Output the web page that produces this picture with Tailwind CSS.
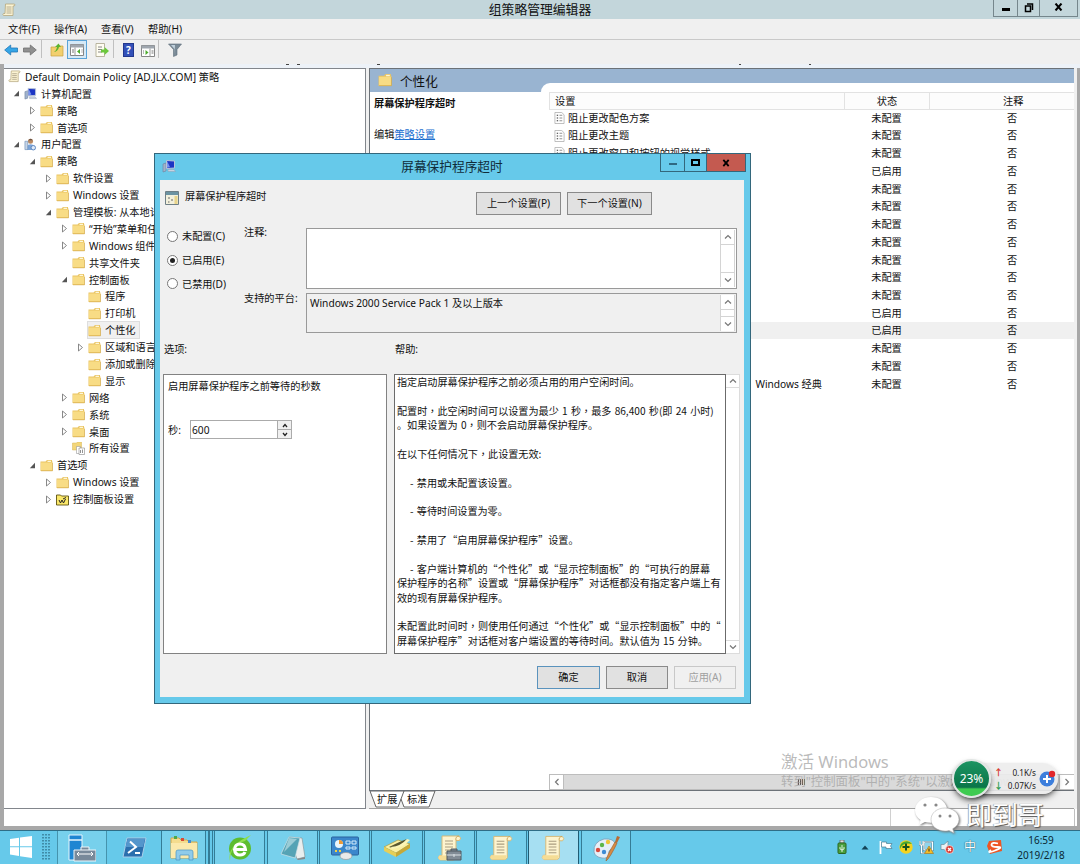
<!DOCTYPE html>
<html lang="zh-CN">
<head>
  <meta charset="UTF-8">
  <meta name="viewport" content="width=device-width, initial-scale=1.0">
  <title>组策略管理编辑器</title>
  <script src="https://cdn.jsdelivr.net/npm/@tailwindcss/browser@4"></script>
</head>
<body class="relative w-[1080px] h-[864px] overflow-hidden bg-[#f0f0f0] text-[10.2px] leading-none text-[#111] font-['Noto_Sans','Noto_Sans_CJK_SC',sans-serif] whitespace-nowrap">

  <!-- Icon sprite -->
  <svg class="hidden">
    <symbol id="folder" viewBox="0 0 13 13">
      <path d="M.5 2.500h5l1.500-1.500h5v1.500h.5v9.500h-12z" fill="#e9c463"/>
      <path d="M1 3.500h11v8H1z" fill="#f8dc85"/>
      <path d="M7.500 1.700h3.500v1.300h-3.500z" fill="#fdf6d8"/>
      <path d="M1 11.800h11.500V4" fill="none" stroke="#d0a644" stroke-width=".6"/>
    </symbol>
    <symbol id="scroll" viewBox="0 0 14 14">
      <path d="M3.500 1h9q1 1-.2 2H11v9.500H1.500q-1.200-1 0-2H3z" fill="#fbf3d3" stroke="#b5a77d" stroke-width=".8"/>
      <path d="M4.500 4h5M4.500 6h5M4.500 8h5M4.500 10h5" stroke="#a39a80" stroke-width=".8"/>
    </symbol>
    <symbol id="computer" viewBox="0 0 14 14">
      <path d="M1 5l3-1v8l-3 1z" fill="#9fb2cc" stroke="#6c7f9c" stroke-width=".6"/>
      <path d="M4.500 1.500l8 .5v7l-8 .5z" fill="#1c35c4" stroke="#b9c4d8"/>
      <path d="M5 2l3 6-3 .8z" fill="#7894f0"/>
      <path d="M6 10.500h6l1.500 2H6z" fill="#c9d2e0" stroke="#8494ac" stroke-width=".4"/>
    </symbol>
    <symbol id="user" viewBox="0 0 14 14">
      <circle cx="7" cy="3.500" r="2.700" fill="#b98962"/>
      <path d="M4.500 2.500q3-3.500 5 0z" fill="#6a5040"/>
      <path d="M3 13V8.500q4-4 9 .5v4z" fill="#7ba4d8"/>
      <path d="M1 3.500h3v9H1z" fill="#c6d4e6" stroke="#6f8fb8" stroke-width=".7"/>
      <circle cx="10" cy="10.500" r="2.400" fill="#dfeaf8" stroke="#5a84bd"/>
    </symbol>
    <symbol id="allset" viewBox="0 0 13 13">
      <path d="M.5 1h4l1-1h4v8h-9z" fill="#f3d679" stroke="#d6b455" stroke-width=".5"/>
      <path d="M4.500 4.500h4v7h-4z" fill="#fff" stroke="#999" stroke-width=".6"/>
      <path d="M7 6h5.500v6.500H7z" fill="#fff" stroke="#888" stroke-width=".6"/>
      <path d="M8.500 8v3M10.500 7.500v3.500" stroke="#777" stroke-width=".8"/>
    </symbol>
    <symbol id="cpl" viewBox="0 0 13 13">
      <path d="M.5 2h4l1 1h7v9h-12z" fill="#fbe86a" stroke="#5d5210" stroke-width=".9"/>
      <path d="M3 7l1.500 3 1.500-3 1.500 3L9.500 6M7 6l3-1.500" fill="none" stroke="#222"/>
    </symbol>
    <symbol id="item" viewBox="0 0 12 13">
      <path d="M1 .5h7.500L11 3v9.500H1z" fill="#fff" stroke="#a9a9a9" stroke-width=".8"/>
      <path d="M3 3.500h1.500M3 6.500h1.500M3 9.500h1.500" stroke="#333" stroke-width="1.300"/>
      <path d="M6 3.500h3M6 6.500h3M6 9.500h3" stroke="#888"/>
    </symbol>
    <symbol id="open" viewBox="0 0 7 7"><path d="M6 .8v5.400H.8z" fill="#555"/></symbol>
    <symbol id="closed" viewBox="0 0 7 9"><path d="M1.500 1v7L5.500 4.500z" fill="#fff" stroke="#7c7c7c" stroke-width=".9"/></symbol>
    <symbol id="up" viewBox="0 0 8 6"><path d="M1 4.500L4 1.500l3 3" fill="none" stroke="#777" stroke-width="1.200"/></symbol>
    <symbol id="down" viewBox="0 0 8 6"><path d="M1 1.500l3 3 3-3" fill="none" stroke="#777" stroke-width="1.200"/></symbol>
    <symbol id="bigscroll" viewBox="0 0 28 28">
      <path d="M6 2h17q3 2 .5 4.500H20V24q-1 2-3 2H4q-3-2-.5-4.500H6z" fill="#fdf4cf" stroke="#d6b978"/>
      <path d="M20 6.500q-1-4 3-4.500" fill="none" stroke="#c9a55c"/>
      <path d="M3.500 21.500H19q1 4-2 4.500H4q-3-2-.5-4.500z" fill="#f5dd96"/>
      <path d="M9 7h8M9 10h8M9 13h8M9 16h8M9 19h8" stroke="#a99c80" stroke-width="1.100"/>
    </symbol>
  </svg>

  <!-- Title bar -->
  <header class="flex h-[19px] bg-[#c3d6db]">
    <svg class="w-[14px] h-[14px] ml-[2px] mt-[3px]"><use href="#scroll"/></svg>
    <h1 class="flex-1 text-center text-[12.8px] leading-[19px] pl-[71px]">组策略管理编辑器</h1>
    <div class="flex h-[17px] w-[85px] mr-[2px] border border-t-0 border-[#75868c]">
      <div class="w-[24px] border-r border-[#75868c] flex justify-center"><span class="w-[8px] h-[3px] bg-black mt-[8px]"></span></div>
      <div class="w-[22px] border-r border-[#75868c] flex justify-center">
        <svg class="w-[10px] h-[10px] mt-[3px]" viewBox="0 0 10 10"><path d="M1.500 3h5v5.500h-5zM3 1h5.500v6" fill="none" stroke="#000" stroke-width="1.500"/></svg>
      </div>
      <div class="flex-1 flex justify-center"><svg class="w-[9px] h-[8px] mt-[3px]" viewBox="0 0 9 8"><path d="M1.500.5l6 7M7.500.5l-6 7" stroke="#000" stroke-width="2"/></svg></div>
    </div>
  </header>

  <!-- Menu -->
  <nav class="flex h-[21px] items-center pl-[8px] border-b border-[#c9c9c9]">
    <span class="w-[46px]">文件(F)</span>
    <span class="w-[47px]">操作(A)</span>
    <span class="w-[47px]">查看(V)</span>
    <span>帮助(H)</span>
  </nav>

  <!-- Toolbar -->
  <div class="flex h-[24px] items-start pl-[4px]">
    <svg class="w-[14px] h-[14px] mt-[3px]" viewBox="0 0 14 14"><path d="M.7 7l6-5v3h6.800v4H6.700v3z" fill="#35a5e6" stroke="#2277b8" stroke-width=".8"/></svg>
    <svg class="w-[14px] h-[14px] mt-[3px] ml-[5px]" viewBox="0 0 14 14"><path d="M13.300 7l-6-5v3H.5v4h6.800v3z" fill="#909090" stroke="#6e6e6e" stroke-width=".8"/></svg>
    <span class="w-px h-[18px] bg-[#c0c0c0] ml-[4px]"></span>
    <svg class="w-[14px] h-[14px] mt-[3px] ml-[8px]" viewBox="0 0 14 14"><path d="M1 4h5l1-1h6v10H1z" fill="#f2cf6e" stroke="#c9a040" stroke-width=".7"/><path d="M3 9q3 0 4-5H5l3.500-3.500L11 4H9Q8 9 3 9z" fill="#5cb52f"/></svg>
    <span class="flex items-center justify-center w-[20px] h-[19px] ml-[3px] border border-[#5aa3d8] bg-[#d5e9f7]">
      <svg class="w-[14px] h-[12px]" viewBox="0 0 14 12"><path d="M.5.500h13v11H.5z" fill="#fff" stroke="#858585"/><path d="M.5.500h13v3H.5z" fill="#9fa6ae"/><path d="M5 3.500v8" stroke="#999"/><path d="M2 6h2M2 8h2M11.500 6h1M11.500 8h1" stroke="#777"/><path d="M10 5v5L7 7.500z" fill="#4dab2c"/></svg>
    </span>
    <svg class="w-[14px] h-[14px] mt-[3px] ml-[8px]" viewBox="0 0 14 14"><path d="M1 .5h8.500v13H1z" fill="#fffdf2" stroke="#a8a48c" stroke-width=".8"/><path d="M3 4h4M3 6.500h4M3 9h4" stroke="#888"/><path d="M6 6.500h3.500V4L14 8l-4.500 4V9.500H6z" fill="#6cc83c"/></svg>
    <span class="w-px h-[18px] bg-[#c0c0c0] ml-[4px]"></span>
    <span class="flex items-center justify-center w-[11px] h-[14px] ml-[9px] mt-[3px] bg-[#3350b8] border border-[#22388e] text-white font-bold text-[10px]">?</span>
    <svg class="w-[14px] h-[12px] mt-[5px] ml-[7px]" viewBox="0 0 14 12"><path d="M.5.500h13v11H.5z" fill="#fff" stroke="#858585"/><path d="M.5.500h13v3H.5z" fill="#9fa6ae"/><path d="M9 3.500v8" stroke="#999"/><path d="M2 6h1M2 8h1M10.500 6h2M10.500 8h2" stroke="#777"/><path d="M4.500 5v5l3-2.500z" fill="#4dab2c"/></svg>
    <span class="w-px h-[18px] bg-[#c0c0c0] ml-[3px]"></span>
    <svg class="w-[14px] h-[14px] mt-[3px] ml-[9px]" viewBox="0 0 14 14"><path d="M.5 1h13L9 6.500V12l-3.500 1.500v-7z" fill="#7b8b97" stroke="#5c6c78" stroke-width=".6"/><path d="M3 2h4L6.500 11V6z" fill="#c2d2de"/></svg>
  </div>
  <!-- Clipped caption remains above the panes -->
  <div class="flex h-[4px] bg-[#edf2f8] border-l-4 border-[#a8a8a8]">
    <span class="w-[3px] h-px bg-[#444] ml-[282px]"></span><span class="w-[3px] h-px bg-[#444] ml-[8px]"></span>
    <span class="w-[3px] h-px bg-[#444] ml-[77px]"></span><span class="w-[2px] h-px bg-[#444] ml-[359px]"></span><span class="w-[2px] h-px bg-[#444] ml-[68px]"></span>
  </div>

  <!-- Panes -->
  <main class="flex h-[741px] border-l-4 border-r-3 border-[#a8a8a8]">
    <div id="tree" class="w-[362px] border border-l-0 border-[#82868c] bg-white overflow-hidden"></div>

    <div class="w-[705px] ml-[3px] flex flex-col">
      <section class="flex h-[723px] bg-[#99b4d1] border border-r-0 border-[#6c7278]">
        <!-- Extended view -->
        <div class="w-[171px] flex flex-col">
          <div class="flex h-[23px] items-center pl-[8px] text-[12.6px]">
            <svg class="w-[14px] h-[14px] -mt-[2px] mr-[8px]"><use href="#folder"/></svg><span class="mt-[3px]">个性化</span>
          </div>
          <div class="flex-1 bg-white pl-[4px] pt-[6px]">
            <p class="font-bold">屏幕保护程序超时</p>
            <p class="mt-[21px]">编辑<a class="text-[#1a6fd0] underline">策略设置</a></p>
          </div>
        </div>
        <!-- Settings list -->
        <div class="flex-1 flex flex-col mt-[14px] bg-white rounded-tl-[9px] pl-[8px]">
          <div class="flex h-[18px] mt-[9px] border border-[#e2e2e2] border-r-0 bg-[#fcfcfc] items-center">
            <span class="w-[294px] pl-[5px]">设置</span>
            <span class="w-[86px] h-full border-x border-[#e2e2e2] flex items-center justify-center">状态</span>
            <span class="flex-1 pl-[73px]">注释</span>
          </div>
          <div id="list" class="flex-1 -mt-px"></div>
          <div class="flex h-[16px] bg-[#dadada] border-y border-[#bdbdbd]">
            <span class="flex items-center justify-center w-[15px] bg-white border border-y-0 border-[#bdbdbd]"><svg class="w-[8px] h-[6px] -rotate-90"><use href="#up"/></svg></span>
            <span class="flex-1 flex items-center justify-center gap-px pr-[21px]"><i class="w-px h-[6px] bg-[#555]"></i><i class="w-px h-[6px] bg-[#555]"></i><i class="w-px h-[6px] bg-[#555]"></i><i class="w-px h-[6px] bg-[#555]"></i></span>
            <span class="flex items-center justify-center w-[15px] bg-white border-l border-[#bdbdbd]"><svg class="w-[8px] h-[6px] rotate-90"><use href="#up"/></svg></span>
          </div>
        </div>
      </section>
      <!-- View tabs -->
      <div class="h-[18px] border-b border-[#a0a0a0]">
        <svg class="w-[80px] h-[17px]" viewBox="0 0 80 17">
          <path d="M1 0L7 16H29L35 0zM32 8l3 8h25L66 0H35" fill="#fff" stroke="#555" stroke-width=".9"/>
          <text x="8" y="12" font-size="10.200" fill="#111">扩展</text>
          <text x="38" y="12" font-size="10.200" fill="#111">标准</text>
        </svg>
      </div>
    </div>
  </main>

  <!-- Status bar -->
  <div class="flex h-[17px] border-l-4 border-r-3 border-[#a8a8a8] bg-white">
    <span class="w-[887px] border-r border-[#d0d0d0]"></span><span class="w-[184px] border-r border-[#c0c0c0]"></span>
  </div>
  <div class="h-[4px] bg-[#a8a8a8]"></div>

  <!-- Taskbar -->
  <footer class="flex h-[34px] bg-[#66c9ea] border-t border-[#2f6d86]">
    <div class="flex w-[57px]">
      <svg class="w-[24px] h-[24px] ml-[9px] mt-[4px]" viewBox="0 0 24 24"><path d="M1 4l9-1.300v8.600H1zM11 2.500L23 1v10.300H11zM1 12.300h9V21l-9-1.500zM11 12.300h12V23l-12-1.700z" fill="#fff"/></svg>
      <svg class="w-[8px] h-[27px] ml-[9px] mt-[3px]" viewBox="0 0 8 27"><path d="M1 0v27M4 0v27M7 0v27" stroke="#27647c" stroke-width="1.200" stroke-dasharray="1.500 1.500"/></svg>
    </div>
    <div class="flex justify-center items-center w-[50px] bg-[#77d0ec] border-x border-[#4593ad]">
      <svg class="w-[28px] h-[28px]" viewBox="0 0 28 28"><path d="M1 1h13v25H1z" fill="#1f86d2" stroke="#e6f5fc"/><path d="M1 6h13" stroke="#e6f5fc" stroke-width="1.500"/><path d="M6 16h22v11H6zM13 16v-3h8v3" fill="#78899a" stroke="#eef5f9"/><path d="M9 20h16M11 18l-2 2 2 2M23 18l2 2-2 2" fill="none" stroke="#fff"/></svg>
    </div>
    <div class="flex justify-center items-center w-[54px]">
      <svg class="w-[25px] h-[21px]" viewBox="0 0 25 21"><path d="M5 1h19l-4 19H1z" fill="#2b6fae" stroke="#a9cfea"/><path d="M5.500 2H23l-2 8H3.500z" fill="#5496cc"/><path d="M8 4.500l6 5.500-8 6M13 16h5" fill="none" stroke="#fff" stroke-width="2"/></svg>
    </div>
    <div class="flex justify-center items-center w-[45px] bg-[#77d0ec] border-x border-[#347c96]">
      <svg class="w-[28px] h-[26px]" viewBox="0 0 28 26"><path d="M1 3h8l2 2h6l2 2h8v16H1z" fill="#f4dc8e" stroke="#d2a84a"/><path d="M1 8h26v15H1z" fill="#fbe9ac"/><path d="M4 1h3v3H4z" fill="#4ca94a"/><path d="M11 3h3v3h-3z" fill="#d84b36"/><path d="M18 5h3v3h-3z" fill="#448ad0"/><path d="M6 25v-8q0-2 2-2h13q2 0 2 2v8h-4v-5h-9v5z" fill="#8fcbea" stroke="#4793c4" stroke-width=".7"/></svg>
    </div>
    <div class="w-[3px] border-r border-[#347c96]"></div>
    <div class="w-[4px] mr-px border-x border-[#347c96]"></div>
    <div class="flex justify-center items-center w-[51px] mr-[2px] bg-[#77d0ec] border-x border-[#347c96]">
      <svg class="w-[26px] h-[28px]" viewBox="0 0 26 28"><circle cx="13" cy="14.500" r="11" fill="#5dbd2f"/><path d="M3 27Q-1 12 24 1q-5 5-6 6Q3 11 3 27z" fill="#8ee04c"/><path d="M7.500 15.500h11q-.5-5.500-5.500-5.500t-5.500 5.500q.5 5.500 5.500 5.500 4 0 5-3" fill="none" stroke="#fff" stroke-width="3"/></svg>
    </div>
    <div class="flex justify-center items-center w-[51px] mr-px bg-[#77d0ec] border-x border-[#347c96]">
      <svg class="w-[26px] h-[26px]" viewBox="0 0 26 26"><path d="M9 2l13 1 3 19-8 2z" fill="#e9eeee" stroke="#8a9a9d" stroke-width=".7"/><path d="M9 2l11 1-5 20-14-4z" fill="#55a3b5" stroke="#d3e3e6" stroke-width=".7"/><path d="M9 3l8 1-13 13z" fill="#9bccd6"/><path d="M17 24l8-2v2l-7 1z" fill="#888"/></svg>
    </div>
    <div class="flex justify-center items-center w-[51px] mr-px bg-[#77d0ec] border-x border-[#347c96]">
      <svg class="w-[28px] h-[24px]" viewBox="0 0 28 24"><rect x=".5" y="1" width="27" height="18" rx="1" fill="#3b87cc" stroke="#2a639d"/><circle cx="8" cy="8" r="4" fill="#e9f4fb"/><path d="M8 8V4a4 4 0 0 1 4 4z" fill="#ee9a35"/><path d="M15 5h4v3h-4zM21 5h4v3h-4zM15 11h4v2h-4zM21 11h4v2h-4z" fill="none" stroke="#d5ecfa"/><path d="M4 15h2M8 15h2" stroke="#f4d03c" stroke-width="2"/><ellipse cx="15" cy="20" rx="6" ry="3.500" fill="#e9e9e9" stroke="#999" stroke-width=".7"/></svg>
    </div>
    <div class="flex justify-center items-center w-[52px] mr-px bg-[#6ccbea] border-x border-[#347c96]">
      <svg class="w-[28px] h-[20px]" viewBox="0 0 28 20"><path d="M1 9L15 2l12 4L13 15z" fill="#faf0a2" stroke="#b09a34" stroke-width=".7"/><path d="M1 9l12 6v4L1 13z" fill="#e6cf58"/><path d="M13 15L27 6v4L13 19z" fill="#c7a937"/><path d="M6 9q9 3 18-8-6 2-18 8z" fill="#5a5830"/><path d="M8 9Q18 8 24 1l3 1Q20 10 9 11z" fill="#fbf5b8"/></svg>
    </div>
    <div class="flex justify-center items-center w-[51px] mr-px bg-[#77d0ec] border-x border-[#347c96]">
      <svg class="w-[28px] h-[28px]" viewBox="0 0 28 28"><use href="#bigscroll"/><path d="M11 17h14v9H11zM15 17v-2h6v2" fill="#818b95" stroke="#4e5861"/><path d="M11 21h14M18 20v3" stroke="#dce2e6"/></svg>
    </div>
    <div class="flex justify-center items-center w-[51px] mr-px bg-[#77d0ec] border-x border-[#347c96]"><svg class="w-[27px] h-[28px]"><use href="#bigscroll"/></svg></div>
    <div class="flex justify-center items-center w-[51px] mr-[2px] bg-[#a6dff2] border-x border-[#1f5c74]"><svg class="w-[27px] h-[28px]"><use href="#bigscroll"/></svg></div>
    <div class="flex justify-center items-center w-[50px] bg-[#77d0ec] border-x border-[#347c96]">
      <svg class="w-[28px] h-[28px]" viewBox="0 0 28 28"><path d="M2 18Q1 8 12 5q10-1 12 6 0 3-4 4t-3 5q-1 5-7 4-7-1-8-6z" fill="#e5eff7" stroke="#7d9db8" stroke-width=".8"/><circle cx="6" cy="16" r="2.200" fill="#d9493c"/><circle cx="10" cy="11" r="2.200" fill="#5bb548"/><circle cx="16" cy="8" r="2.200" fill="#efc437"/><circle cx="12" cy="18" r="2.200" fill="#3d8bd3"/><path d="M14 27q0-4 9-19l2 1q-7 15-11 18z" fill="#d78b45" stroke="#9b5c28" stroke-width=".6"/><path d="M23 8l2-6 3 1-3 6z" fill="#b96c34"/></svg>
    </div>

    <div class="flex items-center ml-auto h-[32px]">
      <svg class="w-[12px] h-[14px]" viewBox="0 0 12 14"><path d="M4 0h4v3H4z" fill="#ddd" stroke="#555" stroke-width=".7"/><rect x="2" y="3" width="8" height="10.500" rx="1" fill="#4aa03c" stroke="#2c6421"/><path d="M6 5v7M4 7v2l2 1M8 7v2l-2 1" fill="none" stroke="#fff" stroke-width=".8"/></svg>
      <svg class="w-[8px] h-[5px] ml-[13px]" viewBox="0 0 8 5"><path d="M4 .5L7.500 4.500h-7z" fill="#134357"/></svg>
      <svg class="w-[14px] h-[14px] ml-[10px]" viewBox="0 0 14 14"><path d="M1.500 1v13" stroke="#fff" stroke-width="1.800"/><path d="M2.500 2h5v1.500H13L11.500 6l1.500 2.500H7V7H2.500z" fill="#fff" stroke="#4b7d91" stroke-width=".7"/></svg>
      <svg class="w-[14px] h-[14px] ml-[6px]" viewBox="0 0 14 14"><circle cx="7" cy="7" r="6.700" fill="#f5d321"/><path d="M1 9Q4 2 13 4a6.700 6.700 0 0 0-12 5z" fill="#45ab31"/><path d="M7 3.500v7M3.500 7h7" stroke="#18541e" stroke-width="2"/></svg>
      <svg class="w-[15px] h-[14px] ml-[6px]" viewBox="0 0 15 14"><path d="M5 2h8.500v8H5z" fill="#8ed4ec" stroke="#3f7389" stroke-width="2"/><path d="M1 1v4h3V1M2.500 5v8H8" fill="none" stroke="#3f7389" stroke-width="2"/><path d="M5 2h8.500v8H5z" fill="none" stroke="#fff" stroke-width="1.200"/><path d="M1 1v4h3V1M2.500 5v8H8" fill="none" stroke="#fff" stroke-width="1.200"/><path d="M10 6l4.500 7.500h-9z" fill="#f6bd27" stroke="#a56f10" stroke-width=".6"/><path d="M10 8.500v3" stroke="#222"/></svg>
      <svg class="w-[14px] h-[14px] ml-[6px]" viewBox="0 0 14 14"><path d="M1 4.500h3L8 1v12L4 9.500H1z" fill="#e9f2f5" stroke="#6b8d9b" stroke-width=".7"/><circle cx="9.500" cy="9.500" r="4" fill="#d93a33" stroke="#fff" stroke-width=".6"/><path d="M8 8l3 3M11 8l-3 3" stroke="#fff" stroke-width="1.300"/></svg>
      <span class="ml-[10px] text-[12px] text-white [text-shadow:0_0_1px_#23566b,0_0_1px_#23566b]">中</span>
      <svg class="w-[15px] h-[14px] ml-[11px]" viewBox="0 0 15 14"><path d="M2 1l12-1 1 11-12 3-3-8z" fill="#ee5623"/><path d="M11 3.500Q5 2 4.500 4.500T10.500 7 8 10.500 4 10" fill="none" stroke="#fff" stroke-width="1.800"/></svg>
      <div class="w-[78px] pt-px text-center leading-[15px] text-[10px] text-[#0b2733]"><p>16:59</p><p>2019/2/18</p></div>
    </div>
  </footer>

  <!-- Activation notice -->
  <div class="absolute left-[781px] top-[752px] text-[#9d9d9d]/70">
    <p class="text-[16.500px] leading-[20px]">激活 Windows</p>
    <p class="text-[12.400px] leading-[20px]">转到"控制面板"中的"系统"以激活 Windows。</p>
  </div>

  <!-- Network speed widget -->
  <div class="absolute left-[952px] top-[759px] flex items-center">
    <div class="relative z-10 flex items-center justify-center w-[39px] h-[39px] rounded-full border-2 border-[#e2e6e4] bg-linear-to-b from-[#1b9462] via-[#0b7549] via-75% to-[#3fcb51] to-80% text-white text-[12px] shadow-md shadow-black/50">23%</div>
    <div class="flex items-center w-[87px] h-[31px] -ml-[20px] pl-[23px] rounded-r-full bg-[#ececec]/90 shadow-md shadow-black/50 text-[8.200px] text-[#222]">
      <div class="flex flex-col gap-[4px] text-[9px] font-bold"><span class="text-[#d63a2f]">↑</span><span class="text-[#2d9c50]">↓</span></div>
      <div class="w-[32px] ml-[1px] text-right leading-[13px]"><p>0.1K/s</p><p>0.07K/s</p></div>
      <svg class="w-[17px] h-[17px] ml-[3px]" viewBox="0 0 17 17"><circle cx="8" cy="9" r="7.500" fill="#3d7fdc"/><path d="M8 5v8M4 9h8" stroke="#fff" stroke-width="2"/><circle cx="13" cy="4" r="3.200" fill="#e2272b"/></svg>
    </div>
  </div>

  <!-- Account mark -->
  <div class="absolute left-[914px] top-[794px] flex items-center">
    <svg class="w-[46px] h-[38px] drop-shadow-[1px_1px_1px_#777]" viewBox="0 0 46 38">
      <path d="M17 1C8 1 1 7 1 14.500c0 4 2 7 5.500 9.500L5 29l6-3q3 1 7 .8-2-12 15-15C31 5 25 1 17 1z" fill="#fff"/>
      <path d="M31 12c-8 0-14 5-14 11.500S23 35 31 35q2 0 4-.6l5 2.600-1.300-4.200Q45 29 45 23.500C45 17 39 12 31 12z" fill="#fff" stroke="#aaa" stroke-width=".5"/>
      <circle cx="11" cy="9" r="1.600" fill="#888"/><circle cx="22" cy="9" r="1.600" fill="#888"/><circle cx="26" cy="20" r="1.500" fill="#888"/><circle cx="36" cy="20" r="1.500" fill="#888"/>
    </svg>
    <span class="ml-[6px] text-[26px] leading-[42px] text-white [text-shadow:1px_1px_1px_#555,-0.500px_-0.500px_1px_#888]">即到哥</span>
  </div>

  <!-- Policy dialog -->
  <div class="absolute left-[154px] top-[153px] w-[597px] h-[551px] flex flex-col border border-[#33677c] bg-[#66c9ea] pl-[5px] pr-[6px] pb-[6px]">
    <div class="relative flex h-[26px]">
      <svg class="w-[14px] h-[14px] ml-[2px] mt-[5px]"><use href="#computer"/></svg>
      <h2 class="flex-1 text-center text-[12.700px] leading-[25px] text-[#102c3a] pr-[16px]">屏幕保护程序超时</h2>
      <div class="absolute right-[-2px] -top-px flex h-[19px] w-[86px] border border-[#33677c]">
        <span class="w-[24px] border-r border-[#33677c] flex justify-center"><i class="w-[8px] h-[2px] bg-[#2f6982] mt-[9px]"></i></span>
        <span class="w-[22px] border-r border-[#33677c] flex justify-center"><i class="w-[9px] h-[7px] border-2 border-black mt-[5px]"></i></span>
        <span class="flex-1 bg-[#c45a50] flex justify-center"><svg class="w-[8px] h-[8px] mt-[5px]" viewBox="0 0 9 8"><path d="M1.500.5l6 7M7.500.5l-6 7" stroke="#000" stroke-width="2"/></svg></span>
      </div>
    </div>

    <div class="flex-1 flex flex-col bg-[#f0f0f0] pl-[3px]">
      <div class="flex pt-[11px] h-[47px]">
        <svg class="w-[14px] h-[14px] ml-[2px]" viewBox="0 0 14 14"><path d="M.5.500h13v13H.5z" fill="#f3f0dc" stroke="#6f7f86"/><path d="M1 1h12v3H1z" fill="#6c93a2"/><path d="M9.500 5h3v8h-3z" fill="#e8d48a"/><path d="M3 7h2M6 9h2M3 11h1.500" stroke="#666"/></svg>
        <span class="ml-[6px] w-[291px]">屏幕保护程序超时</span>
        <button class="w-[85px] h-[23px] mt-px border border-[#8a8a8a] bg-[#e1e1e1]">上一个设置(P)</button>
        <button class="w-[85px] h-[23px] mt-px ml-[6px] border border-[#8a8a8a] bg-[#e1e1e1]">下一个设置(N)</button>
      </div>
      <div class="flex h-[106px]">
        <div class="flex flex-col w-[81px] pl-[4px] pt-[4px] gap-[13px]">
          <label class="flex items-center gap-[4px] h-[10.700px]"><i class="w-[11px] h-[11px] rounded-full border border-[#777] bg-white"></i>未配置(C)</label>
          <label class="flex items-center gap-[4px] h-[10.700px]"><i class="flex items-center justify-center w-[11px] h-[11px] rounded-full border border-[#777] bg-white"><b class="w-[5px] h-[5px] rounded-full bg-[#222]"></b></i>已启用(E)</label>
          <label class="flex items-center gap-[4px] h-[10.700px]"><i class="w-[11px] h-[11px] rounded-full border border-[#777] bg-white"></i>已禁用(D)</label>
        </div>
        <div class="flex flex-col w-[62px] gap-[56px]"><span>注释:</span><span>支持的平台:</span></div>
        <div class="flex flex-col w-[431px] gap-[4px] pt-px">
          <div class="flex justify-end h-[61px] border border-[#999] bg-white p-px">
            <div class="flex flex-col justify-between w-[15px] border-x border-[#d4d4d4]">
              <span class="flex items-center justify-center h-[15px] border-b border-[#d4d4d4]"><svg class="w-[8px] h-[6px]"><use href="#up"/></svg></span>
              <span class="flex items-center justify-center h-[15px] border-t border-[#d4d4d4]"><svg class="w-[8px] h-[6px]"><use href="#down"/></svg></span>
            </div>
          </div>
          <div class="flex h-[40px] border border-[#999] p-px pl-[3px]">
            <span class="flex-1 pt-[3px]">Windows 2000 Service Pack 1 及以上版本</span>
            <div class="flex flex-col justify-between w-[15px] border-x border-[#d4d4d4] bg-white">
              <span class="flex items-center justify-center h-[15px] border-b border-[#d4d4d4]"><svg class="w-[8px] h-[6px]"><use href="#up"/></svg></span>
              <span class="flex items-center justify-center h-[15px] border-t border-[#d4d4d4]"><svg class="w-[8px] h-[6px]"><use href="#down"/></svg></span>
            </div>
          </div>
        </div>
      </div>
      <div class="flex h-[41px] pt-[11px] pl-px"><span class="w-[231px]">选项:</span><span>帮助:</span></div>
      <div class="flex h-[280px]">
        <div class="w-[224px] border border-[#828282] bg-white pl-[4px] pt-[6px]">
          <p>启用屏幕保护程序之前等待的秒数</p>
          <div class="flex items-center mt-[29px]">
            <span class="w-[22px]">秒:</span>
            <div class="flex w-[102px] h-[19px] border border-[#ababab] items-center pl-px">
              <span class="flex-1">600</span>
              <span class="flex flex-col w-[14px] h-full bg-[#f0f0f0] border-l border-[#ababab]">
                <i class="flex-1 flex items-center justify-center border-b border-[#ababab]"><svg class="w-[6px] h-[5px]" viewBox="0 0 6 5"><path d="M1 4l2-2.500L5 4" fill="none" stroke="#222" stroke-width="1.300"/></svg></i>
                <i class="flex-1 flex items-center justify-center"><svg class="w-[6px] h-[5px]" viewBox="0 0 6 5"><path d="M1 1l2 2.500L5 1" fill="none" stroke="#222" stroke-width="1.300"/></svg></i>
              </span>
            </div>
          </div>
        </div>
        <div id="help" class="w-[332px] ml-[7px] border border-[#6b6b6b] bg-white pl-[2px] text-[10.120px] leading-[14.380px] whitespace-pre [word-spacing:1px] font-['Noto_Sans_CJK_SC',sans-serif]"></div>
        <div class="flex flex-col justify-between w-[14px] border border-l-0 border-[#dcdcdc] bg-white">
          <span class="flex items-center justify-center h-[13px] border-b border-[#dcdcdc]"><svg class="w-[8px] h-[6px]"><use href="#up"/></svg></span>
          <span class="flex items-center justify-center h-[13px] border-t border-[#dcdcdc]"><svg class="w-[8px] h-[6px]"><use href="#down"/></svg></span>
        </div>
      </div>
      <div class="flex justify-end gap-[6px] pt-[12px] pr-[8px]">
        <button class="w-[63px] h-[23px] border border-[#5a93bd] bg-[#e1e1e1]">确定</button>
        <button class="w-[62px] h-[23px] border border-[#8a8a8a] bg-[#e1e1e1]">取消</button>
        <button class="w-[62px] h-[23px] border border-[#c8c8c8] bg-[#f0f0f0] text-[#a0a0a0]">应用(A)</button>
      </div>
    </div>
  </div>

  <script>
    // [level, arrow, icon, label]
    const nodes = [
      [0, '', 'scroll', 'Default Domain Policy [AD.JLX.COM] 策略'],
      [1, 'open', 'computer', '计算机配置'],
      [2, 'closed', 'folder', '策略'],
      [2, 'closed', 'folder', '首选项'],
      [1, 'open', 'user', '用户配置'],
      [2, 'open', 'folder', '策略'],
      [3, 'closed', 'folder', '软件设置'],
      [3, 'closed', 'folder', 'Windows 设置'],
      [3, 'open', 'folder', '管理模板: 从本地计算机'],
      [4, 'closed', 'folder', '“开始”菜单和任务栏'],
      [4, 'closed', 'folder', 'Windows 组件'],
      [4, '', 'folder', '共享文件夹'],
      [4, 'open', 'folder', '控制面板'],
      [5, '', 'folder', '程序'],
      [5, '', 'folder', '打印机'],
      [5, '', 'folder', '个性化'],
      [5, 'closed', 'folder', '区域和语言选项'],
      [5, '', 'folder', '添加或删除程序'],
      [5, '', 'folder', '显示'],
      [4, 'closed', 'folder', '网络'],
      [4, 'closed', 'folder', '系统'],
      [4, 'closed', 'folder', '桌面'],
      [4, '', 'allset', '所有设置'],
      [2, 'open', 'folder', '首选项'],
      [3, 'closed', 'folder', 'Windows 设置'],
      [3, 'closed', 'cpl', '控制面板设置']
    ];
    document.getElementById('tree').innerHTML = nodes.map(([level, arrow, icon, label]) => `
      <div class="flex items-center h-[16.900px] first:-mt-[0.500px]" style="padding-left:${Math.max(level * 16 - 12, 0)}px">
        <span class="${level ? 'w-[16px]' : 'w-[4px]'} shrink-0 flex justify-center">${arrow ? `<svg class="w-[7px] h-[9px]"><use href="#${arrow}"/></svg>` : ''}</span>
        <span class="flex items-center h-[16px] pr-[3px] ${label === '个性化' ? 'bg-[#f0f0f0] outline outline-[#dedede]' : ''}">
          <svg class="w-[13px] h-[13px] mr-[4px]"><use href="#${icon}"/></svg>${label}
        </span>
      </div>`).join('');

    const names = { 0: '阻止更改配色方案', 1: '阻止更改主题', 2: '阻止更改窗口和按钮的视觉样式', 15: 'Windows 经典' };
    const enabled = [3, 11, 12];
    let rows = '';
    for (let i = 0; i < 16; i++) {
      rows += `
      <div class="flex items-center h-[17.730px] ${i === 12 ? 'bg-[#f0f0f0]' : ''}">
        <span class="w-[295px] flex items-center pl-[5px] ${i === 15 ? 'justify-end pr-[22px]' : ''}">
          ${i < 3 ? '<svg class="w-[11px] h-[12px] mr-[3px]"><use href="#item"/></svg>' : ''}${names[i] || ''}</span>
        <span class="w-[85px] text-center">${enabled.includes(i) ? '已启用' : '未配置'}</span>
        <span class="flex-1 pl-[78px]">否</span>
      </div>`;
    }
    document.getElementById('list').innerHTML = rows;

    const help = [
      '指定启动屏幕保护程序之前必须占用的用户空闲时间。',
      '',
      '配置时，此空闲时间可以设置为最少 1 秒，最多 86,400 秒(即 24 小时)',
      '。如果设置为 0，则不会启动屏幕保护程序。',
      '',
      '在以下任何情况下，此设置无效:',
      '',
      '    - 禁用或未配置该设置。',
      '',
      '    - 等待时间设置为零。',
      '',
      '    - 禁用了“启用屏幕保护程序”设置。',
      '',
      '    - 客户端计算机的“个性化”或“显示控制面板”的“可执行的屏幕',
      '保护程序的名称”设置或“屏幕保护程序”对话框都没有指定客户端上有',
      '效的现有屏幕保护程序。',
      '',
      '未配置此时间时，则使用任何通过“个性化”或“显示控制面板”中的“',
      '屏幕保护程序”对话框对客户端设置的等待时间。默认值为 15 分钟。'
    ].join('\n');
    // commas sit in the middle of their cell
    document.getElementById('help').innerHTML = help.replace(/，/g, `<span lang="zh-TW" class="font-['Noto_Sans_CJK_TC']">，</span>`);
  </script>
</body>
</html>
